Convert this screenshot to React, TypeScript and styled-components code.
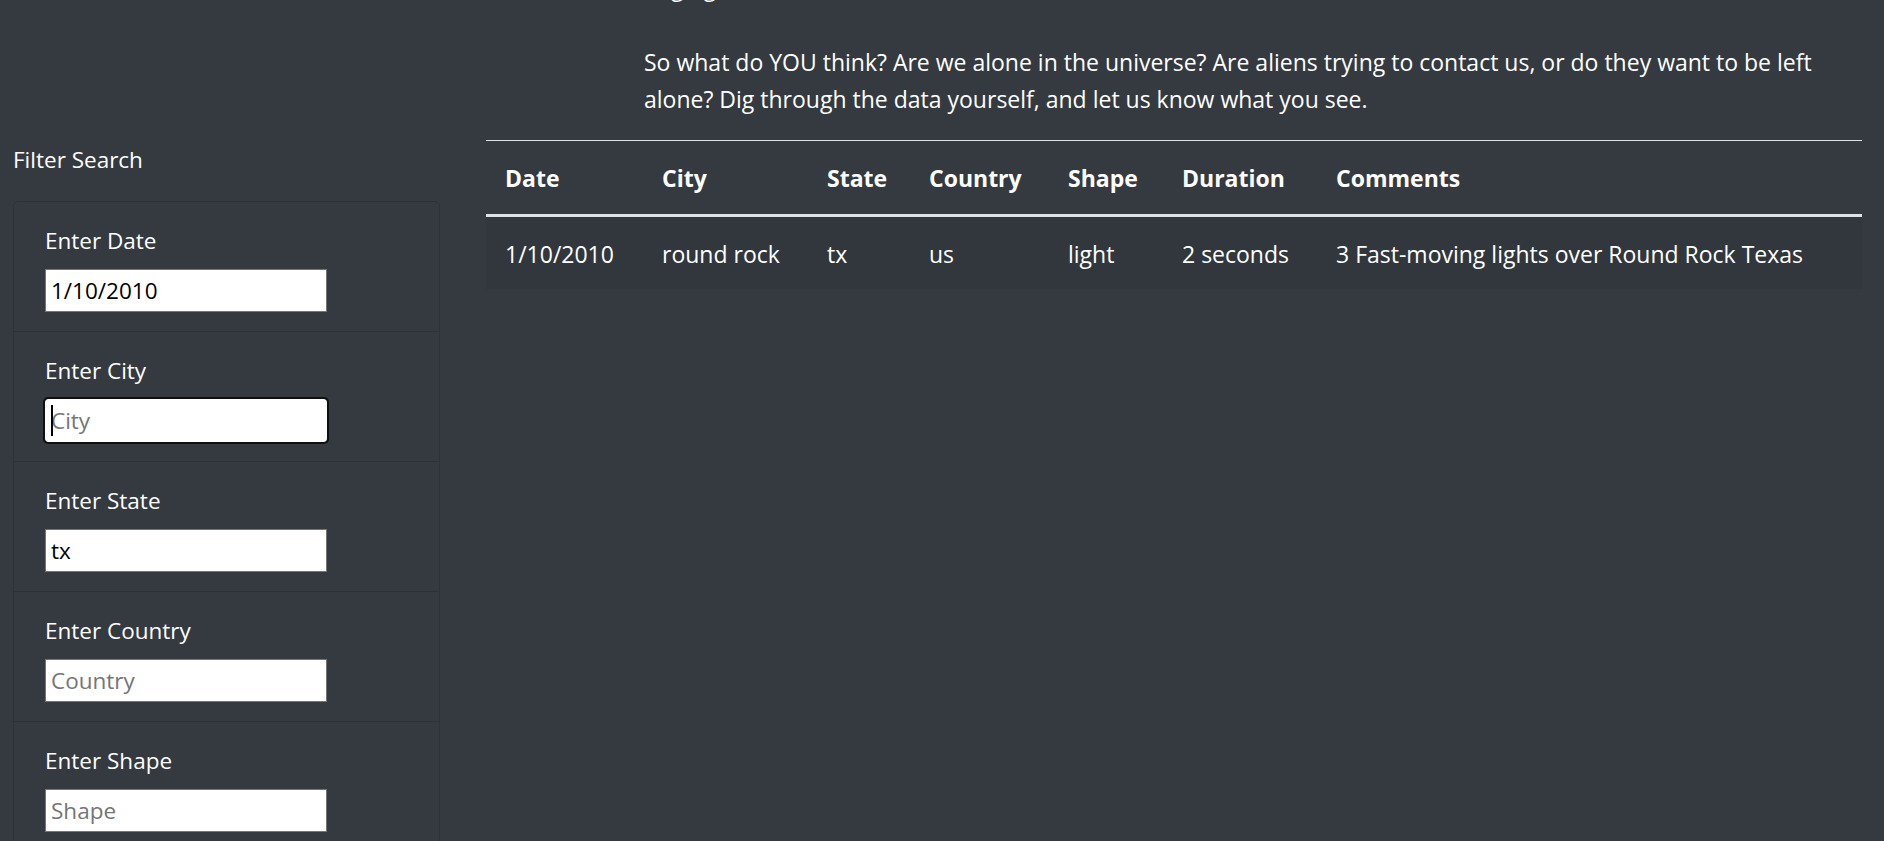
import React from "react";
import styled, { createGlobalStyle } from "styled-components";

const GlobalStyle = createGlobalStyle`
  html, body {
    margin: 0;
    padding: 0;
    overflow: hidden;
    background: #343a40;
  }
  body {
    color: #fff;
    font-family: "Open Sans", "Liberation Sans", sans-serif;
    font-size: 22.5px;
    line-height: 30px;
  }
  * {
    box-sizing: border-box;
  }
`;

const Page = styled.div`
  padding: 0 22px 0 13px;
`;

// the page is scrolled a little: the end of the previous paragraph sits above the fold
const Intro = styled.section`
  margin: -31px 0 22px 631px;
`;

const Paragraph = styled.p<{ $gap?: number }>`
  margin: 0 0 ${(p) => p.$gap ?? 0}px;
  font-size: 23px;
  line-height: 37px;
`;

const Row = styled.div`
  display: grid;
  grid-template-columns: 427px 1fr;
  column-gap: 46px;
  align-items: start;
`;

const Sidebar = styled.aside`
  padding-top: 5px;
`;

const SideTitle = styled.h5`
  margin: 0 0 26px;
  font-size: 22.5px;
  font-weight: 400;
  line-height: 30px;
`;

const Card = styled.ul`
  list-style: none;
  margin: 0;
  padding: 0;
  border: 1px solid rgba(0, 0, 0, 0.125);
  border-radius: 5px;
`;

const FilterItem = styled.li`
  padding: 22px 31px 19px;

  & + & {
    border-top: 1px solid rgba(0, 0, 0, 0.125);
  }
`;

const Label = styled.label`
  display: block;
  margin-bottom: 12px;
  line-height: 33px;
`;

const InputWrap = styled.div`
  position: relative;
  width: 282px;
`;

const Input = styled.input<{ $focused?: boolean }>`
  display: block;
  width: 282px;
  height: 43px;
  padding: 0 5px;
  border: 1px solid ${(p) => (p.$focused ? "#fff" : "#767676")};
  border-radius: ${(p) => (p.$focused ? "3px" : "0")};
  outline: ${(p) => (p.$focused ? "2px solid #101010" : "none")};
  background: #fff;
  color: #000;
  font-family: inherit;
  font-size: 22.5px;

  &::placeholder {
    color: #757575;
  }
`;

const Caret = styled.span`
  position: absolute;
  left: 6px;
  top: 6px;
  width: 2px;
  height: 31px;
  background: #000;
`;

const Table = styled.table`
  width: 100%;
  border-collapse: collapse;
  table-layout: fixed;
  font-size: 23px;
`;

const Th = styled.th`
  padding: 22px 19px 21px;
  text-align: left;
  font-weight: 700;
  vertical-align: bottom;
  border-top: 1px solid #dee2e6;
  border-bottom: 3px solid #dee2e6;
`;

const BodyRow = styled.tr`
  &:nth-of-type(odd) {
    background: rgba(0, 0, 0, 0.05);
  }
`;

const Td = styled.td`
  padding: 22px 19px 20px;
  vertical-align: top;
`;

const columns = [
  { key: "datetime", title: "Date", width: 157 },
  { key: "city", title: "City", width: 165 },
  { key: "state", title: "State", width: 102 },
  { key: "country", title: "Country", width: 139 },
  { key: "shape", title: "Shape", width: 114 },
  { key: "durationMinutes", title: "Duration", width: 154 },
  { key: "comments", title: "Comments" },
] as const;

const sightings = [
  {
    datetime: "1/10/2010",
    city: "round rock",
    state: "tx",
    country: "us",
    shape: "light",
    durationMinutes: "2 seconds",
    comments: "3 Fast-moving lights over Round Rock Texas",
  },
];

const filters = [
  { id: "datetime", label: "Enter Date", placeholder: "1/1/2010", value: "1/10/2010" },
  { id: "city", label: "Enter City", placeholder: "City", value: "", focused: true },
  { id: "state", label: "Enter State", placeholder: "State", value: "tx" },
  { id: "country", label: "Enter Country", placeholder: "Country", value: "" },
  { id: "shape", label: "Enter Shape", placeholder: "Shape", value: "" },
];

export default function App() {
  return (
    <>
      <GlobalStyle />
      <Page>
        <Intro>
          <Paragraph $gap={38}>Raging debate continues.</Paragraph>
          <Paragraph>
            So what do YOU think? Are we alone in the universe? Are aliens trying to contact us, or do they want
            to be left alone? Dig through the data yourself, and let us know what you see.
          </Paragraph>
        </Intro>
        <Row>
          <Sidebar>
            <SideTitle>Filter Search</SideTitle>
            <Card>
              {filters.map((f) => (
                <FilterItem key={f.id}>
                  <Label htmlFor={f.id}>{f.label}</Label>
                  <InputWrap>
                    <Input
                      id={f.id}
                      type="text"
                      placeholder={f.placeholder}
                      defaultValue={f.value}
                      $focused={f.focused}
                    />
                    {f.focused && <Caret />}
                  </InputWrap>
                </FilterItem>
              ))}
            </Card>
          </Sidebar>
          <Table>
            <colgroup>
              {columns.map((c) => (
                <col key={c.key} style={"width" in c ? { width: c.width } : undefined} />
              ))}
            </colgroup>
            <thead>
              <tr>
                {columns.map((c) => (
                  <Th key={c.key}>{c.title}</Th>
                ))}
              </tr>
            </thead>
            <tbody>
              {sightings.map((s, i) => (
                <BodyRow key={i}>
                  {columns.map((c) => (
                    <Td key={c.key}>{s[c.key]}</Td>
                  ))}
                </BodyRow>
              ))}
            </tbody>
          </Table>
        </Row>
      </Page>
    </>
  );
}
